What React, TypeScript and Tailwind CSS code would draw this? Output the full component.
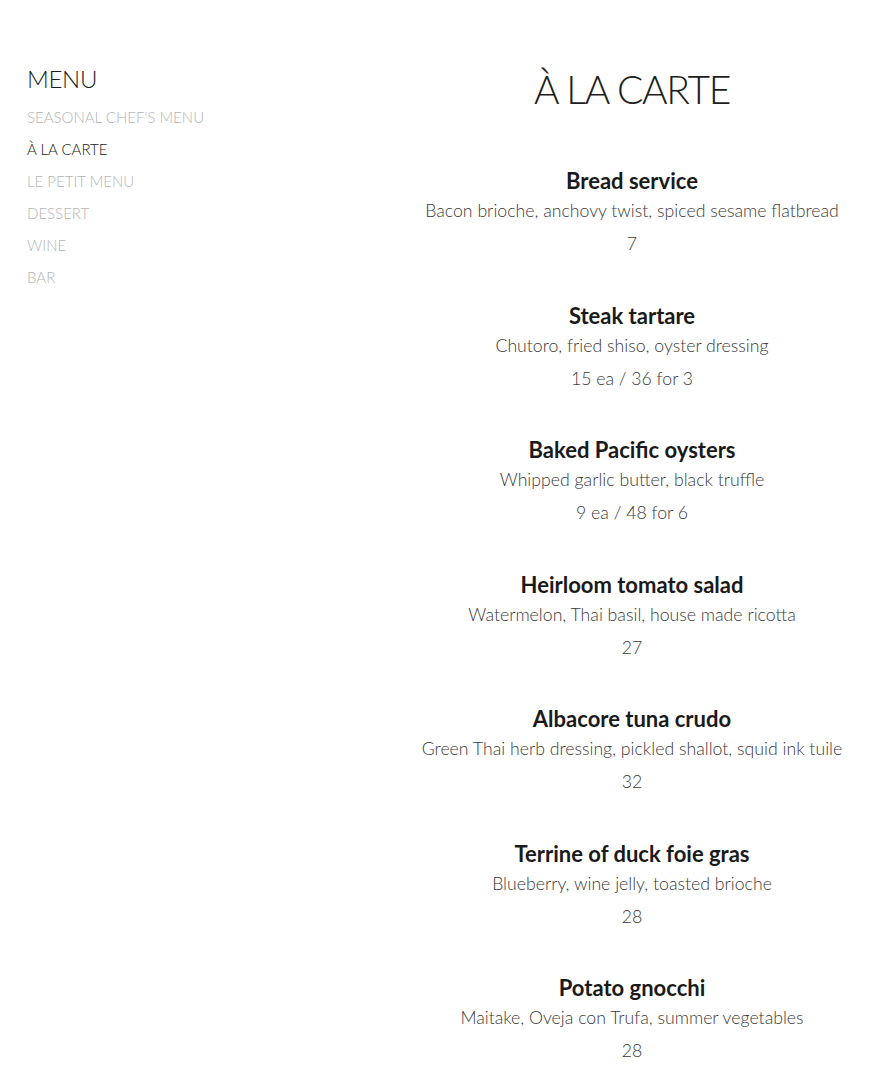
const navItems = [
  { label: "SEASONAL CHEF'S MENU", active: false },
  { label: "À LA CARTE", active: true },
  { label: "LE PETIT MENU", active: false },
  { label: "DESSERT", active: false },
  { label: "WINE", active: false },
  { label: "BAR", active: false },
];

const dishes = [
  { name: "Bread service", desc: "Bacon brioche, anchovy twist, spiced sesame flatbread", price: "7" },
  { name: "Steak tartare", desc: "Chutoro, fried shiso, oyster dressing", price: "15 ea / 36 for 3" },
  { name: "Baked Pacific oysters", desc: "Whipped garlic butter, black truffle", price: "9 ea / 48 for 6" },
  { name: "Heirloom tomato salad", desc: "Watermelon, Thai basil, house made ricotta", price: "27" },
  { name: "Albacore tuna crudo", desc: "Green Thai herb dressing, pickled shallot, squid ink tuile", price: "32" },
  { name: "Terrine of duck foie gras", desc: "Blueberry, wine jelly, toasted brioche", price: "28" },
  { name: "Potato gnocchi", desc: "Maitake, Oveja con Trufa, summer vegetables", price: "28" },
];

export default function App() {
  return (
    <div className="flex min-h-screen bg-white font-['Lato',sans-serif] text-[#1d1d1d]">
      <aside className="w-[394px] shrink-0 pl-[27px] pt-[64px]">
        <h2 className="text-[24px] font-light leading-[30px] tracking-[-0.3px]">MENU</h2>
        <ul className="mt-[7px] flex flex-col">
          {navItems.map(item => (
            <li
              key={item.label}
              className={`text-[15px] font-light leading-[32px] ${item.active ? "text-[#222]" : "text-[#b5b5b5]"}`}
            >
              {item.label}
            </li>
          ))}
        </ul>
      </aside>

      <main className="flex-1 pt-[62px] text-center">
        <h1 className="text-[39px] font-light leading-[54px] tracking-[-1.3px]">À LA CARTE</h1>
        <div className="mt-[52px] flex flex-col gap-[45.5px]">
          {dishes.map(dish => (
            <div key={dish.name} className="flex flex-col items-center">
              <h3 className="text-[22px] font-bold leading-[26px] text-[#1a1a1a]">{dish.name}</h3>
              <p className="mt-[4px] text-[17.7px] font-light leading-[26px] text-[#3a3a3a]">{dish.desc}</p>
              <p className="mt-[7px] text-[17.7px] font-light leading-[26px] text-[#3a3a3a]">{dish.price}</p>
            </div>
          ))}
        </div>
      </main>
    </div>
  );
}
